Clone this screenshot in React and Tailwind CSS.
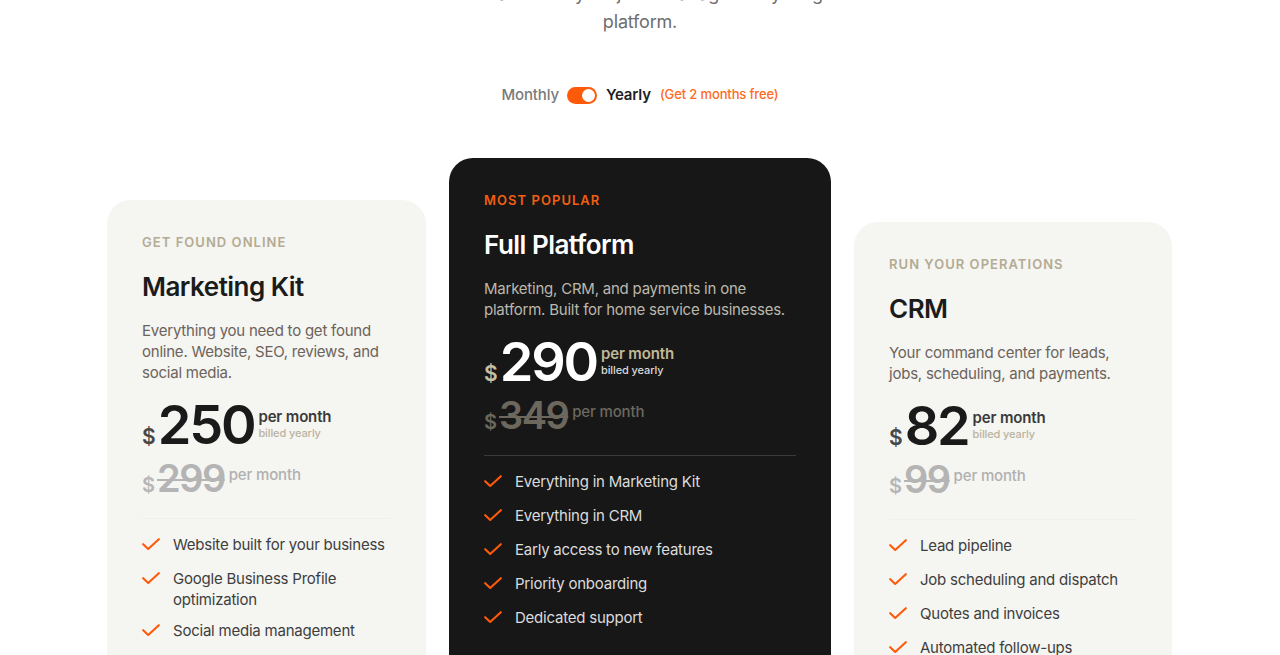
import React from "react";

const font = { fontFamily: "Inter, 'Noto Sans', Arial, sans-serif" };

function Check() {
  return (
    <div className="h-[24px] pt-[4px] shrink-0">
      <svg width="18" height="13" viewBox="0 0 18 13" fill="none">
        <path d="M1.2 6.2 L6.2 11 L16.8 1.2" stroke="#ff5a0a" strokeWidth="2.1" strokeLinecap="round" strokeLinejoin="round" />
      </svg>
    </div>
  );
}

function Card({ dark, label, title, desc, price, old, features, className }) {
  return (
    <div
      className={
        "rounded-[24px] px-[35px] pt-[34px] h-[620px] shrink-0 " +
        (dark ? "bg-[#171717] " : "bg-[#f5f5f1] ") +
        className
      }
    >
      <div
        className={
          "text-[13px] leading-[16px] font-semibold tracking-[0.08em] " +
          (dark ? "text-[#f05f12]" : "text-[#b3ab93]")
        }
      >
        {label}
      </div>
      <div
        className={
          "mt-[21px] text-[26px] leading-[32px] font-semibold tracking-[-0.02em] " +
          (dark ? "text-white" : "text-[#1b1b1b]")
        }
      >
        {title}
      </div>
      <p
        className={
          "mt-[17px] text-[15px] leading-[21px] tracking-[-0.015em] " +
          (dark ? "text-[#bcb7ad]" : "text-[#6c635b]")
        }
      >
        {desc}
      </p>
      <div className="mt-[15px] flex items-baseline">
        <span
          className={
            "text-[21px] font-semibold mr-[2px] " +
            (dark ? "text-[#c8bea2]" : "text-[#474747]")
          }
        >
          $
        </span>
        <span
          className={
            "text-[54px] leading-none font-semibold tracking-[-0.04em] " +
            (dark ? "text-white" : "text-[#1a1a1a]")
          }
        >
          {price}
        </span>
        <div className="self-start ml-[4px] mt-[10px] flex flex-col">
          <span
            className={
              "text-[15px] leading-[18px] font-semibold tracking-[-0.01em] " +
              (dark ? "text-[#c2b898]" : "text-[#3a3a3a]")
            }
          >
            per month
          </span>
          <span
            className={
              "text-[11px] leading-[14px] font-medium tracking-[-0.01em] " +
              (dark ? "text-[#d9d9d9]" : "text-[#bab39f]")
            }
          >
            billed yearly
          </span>
        </div>
      </div>
      <div className="mt-[6px] flex items-baseline">
        <span
          className={
            "text-[20px] font-semibold mr-[2px] " +
            (dark ? "text-[#6c685e]" : "text-[#b6b6b6]")
          }
        >
          $
        </span>
        <span
          className={
            "text-[38px] leading-none font-semibold tracking-[-0.04em] line-through decoration-[1.5px] " +
            (dark ? "text-[#6c685e]" : "text-[#b4b4b4]")
          }
        >
          {old}
        </span>
        <span
          className={
            "self-start ml-[4px] mt-[7px] text-[15px] leading-[18px] font-medium tracking-[-0.01em] " +
            (dark ? "text-[#6c685e]" : "text-[#b0b0b0]")
          }
        >
          per month
        </span>
      </div>
      <div
        className={
          "mt-[18px] border-t " + (dark ? "border-[#3a3a3a]" : "border-[#f0efea]")
        }
      />
      <ul className="pt-[15px] flex flex-col gap-[10px]">
        {features.map((f) => (
          <li key={f} className="flex gap-[13px]">
            <Check />
            <span
              className={
                "text-[15px] leading-[21px] tracking-[-0.015em] " +
                (dark ? "text-[#dcdcdc]" : "text-[#3e3e3e]")
              }
            >
              {f}
            </span>
          </li>
        ))}
      </ul>
    </div>
  );
}

export default function App() {
  return (
    <div className="w-full h-[655px] overflow-hidden bg-white" style={font}>
      <p className="mt-[-20px] text-center text-[18px] leading-[28px] text-[#6e6e6e] tracking-[-0.01em]">
        Get more leads. Run your jobs. Manage everything in one
        <br />
        platform.
      </p>
      <div className="mt-[49px] h-[20px] flex items-center justify-center gap-[8px]">
        <span className="text-[15px] font-medium text-[#7a7a7a] tracking-[-0.01em]">Monthly</span>
        <div className="w-[30px] h-[17px] rounded-full bg-[#ff5a0a] flex items-center justify-end pr-[2px]">
          <div className="w-[13px] h-[13px] rounded-full bg-white" />
        </div>
        <span className="ml-px text-[15px] font-semibold text-[#1f1f1f] tracking-[-0.01em]">Yearly</span>
        <span className="ml-px text-[13px] font-medium text-[#ff6a1c] tracking-[-0.01em]">(Get 2 months free)</span>
      </div>
      <div className="mt-[53px] flex justify-center items-start gap-[23px] pr-px">
        <Card
          className="w-[319px] mt-[42px]"
          label="GET FOUND ONLINE"
          title="Marketing Kit"
          desc="Everything you need to get found online. Website, SEO, reviews, and social media."
          price="250"
          old="299"
          features={[
            "Website built for your business",
            "Google Business Profile optimization",
            "Social media management",
            "Review management",
          ]}
        />
        <Card
          dark
          className="w-[382px]"
          label="MOST POPULAR"
          title="Full Platform"
          desc="Marketing, CRM, and payments in one platform. Built for home service businesses."
          price="290"
          old="349"
          features={[
            "Everything in Marketing Kit",
            "Everything in CRM",
            "Early access to new features",
            "Priority onboarding",
            "Dedicated support",
          ]}
        />
        <Card
          className="w-[318px] mt-[64px]"
          label="RUN YOUR OPERATIONS"
          title="CRM"
          desc="Your command center for leads, jobs, scheduling, and payments."
          price="82"
          old="99"
          features={[
            "Lead pipeline",
            "Job scheduling and dispatch",
            "Quotes and invoices",
            "Automated follow-ups",
            "Online payments",
          ]}
        />
      </div>
    </div>
  );
}
